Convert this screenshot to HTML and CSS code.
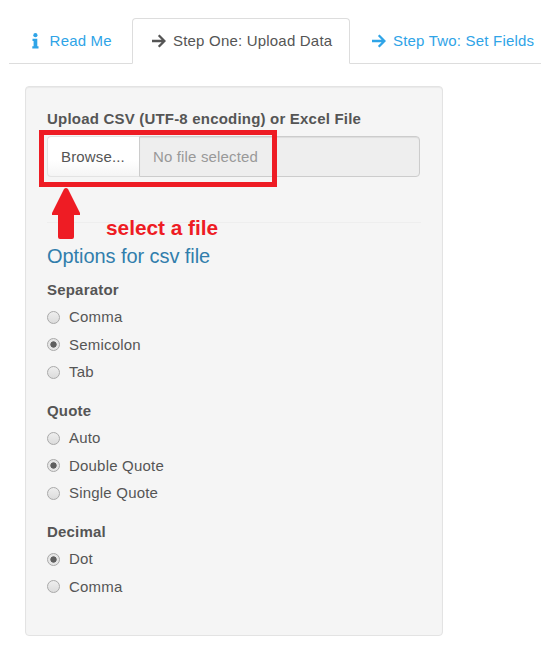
FILE: index.html
```html
<!DOCTYPE html>
<html lang="en">
<head>
<meta charset="utf-8">
<title>Upload Data</title>
<link rel="stylesheet" href="styles.css">
</head>
<body>
<nav class="tabs">
  <a class="tab tab-readme"><svg class="icon-info" viewBox="0 0 7 16"><circle cx="3.4" cy="2.2" r="2.1"/><path d="M.5 5.7h4.8v7.5h1.2v2.3H.3v-2.3h1.3V8H.5z"/></svg><span>Read Me</span></a>
  <a class="tab active"><svg class="icon-arrow" viewBox="0 0 14 14"><path d="M0 7h12M6.7 1.3 12.4 7l-5.7 5.7"/></svg><span>Step One: Upload Data</span></a>
  <a class="tab tab-next"><svg class="icon-arrow" viewBox="0 0 14 14"><path d="M0 7h12M6.7 1.3 12.4 7l-5.7 5.7"/></svg><span>Step Two: Set Fields</span></a>
</nav>
<form class="panel">
  <div class="label upload-label">Upload CSV (UTF-8 encoding) or Excel File</div>
  <div class="upload">
    <span class="browse">Browse...</span>
    <span class="filename">No file selected</span>
  </div>
  <hr>
  <h2>Options for csv file</h2>
  <div class="group">
    <div class="label">Separator</div>
    <label class="option"><i class="radio"></i><span>Comma</span></label>
    <label class="option"><i class="radio checked"></i><span>Semicolon</span></label>
    <label class="option"><i class="radio"></i><span>Tab</span></label>
  </div>
  <div class="group">
    <div class="label">Quote</div>
    <label class="option"><i class="radio"></i><span>Auto</span></label>
    <label class="option"><i class="radio checked"></i><span>Double Quote</span></label>
    <label class="option"><i class="radio"></i><span>Single Quote</span></label>
  </div>
  <div class="group">
    <div class="label">Decimal</div>
    <label class="option"><i class="radio checked"></i><span>Dot</span></label>
    <label class="option"><i class="radio"></i><span>Comma</span></label>
  </div>
  <div class="highlight"></div>
  <svg class="pointer" viewBox="0 0 28 51"><path d="M12 1Q14 -1 16 1L28 25v2h-6v22q0 2-2 2H8q-2 0-2-2V27H0v-2z"/></svg>
  <div class="hint">select a file</div>
</form>
</body>
</html>
```

FILE: styles.css
```css
* { box-sizing: border-box; }
body {
  margin: 0;
  padding: 18px 12px 0 9px;
  background: #fff;
  color: #555;
  font: 15px/21px "Liberation Sans", Arial, sans-serif;
  letter-spacing: 0.2px;
}
.tabs {
  display: flex;
  height: 46px;
  border-bottom: 1px solid #ddd;
}
.tab {
  display: flex;
  align-items: center;
  height: 46px;
  padding: 0 0 1px 19px;
  border: 1px solid transparent;
  color: #2fa4e7;
  white-space: nowrap;
}
.tab.active {
  width: 218px;
  color: #555;
  background: #fff;
  border-color: #ddd #ddd #fff;
  border-radius: 4px 4px 0 0;
}
.tab-readme { width: 123px; padding-left: 22px; }
.tab-next { padding-left: 21px; }
.icon-info { width: 7px; height: 16px; margin-right: 10.6px; fill: currentColor; }
.icon-arrow {
  width: 14px;
  height: 14px;
  margin-right: 7px;
  fill: none;
  stroke: currentColor;
  stroke-width: 2.3;
}
.panel {
  position: relative;
  width: 418px;
  height: 550px;
  margin: 22px 0 0 16px;
  padding: 21px;
  background: #f5f5f5;
  border: 1px solid #e3e3e3;
  border-radius: 4px;
  box-shadow: inset 0 1px 1px rgba(0,0,0,.05);
}
.label { font-weight: bold; height: 21px; }
.upload-label { margin-bottom: 7px; }
.upload { display: flex; width: 373px; height: 41px; line-height: 39px; letter-spacing: 0.15px; }
.browse {
  width: 92px;
  padding-left: 13px;
  border: 1px solid #e3e3e3;
  border-right: 0;
  border-radius: 4px 0 0 4px;
  background: linear-gradient(#fff 60%, #f5f5f5);
}
.filename {
  flex: 1;
  padding-left: 13px;
  color: #999;
  background: #eee;
  border: 1px solid #ccc;
  border-radius: 0 4px 4px 0;
  box-shadow: inset 0 1px 1px rgba(0,0,0,.075);
}
hr { margin: 45px 0 22px; border: 0; border-top: 1px solid #eee; }
h2 {
  margin: 0 0 12px;
  color: #317eac;
  font-size: 20px;
  font-weight: normal;
  line-height: 22px;
  letter-spacing: -0.07px;
}
.group { height: 121px; }
.group .label { margin-bottom: 7px; }
.option { display: flex; align-items: center; height: 21px; margin-bottom: 6.4px; }
.option span { padding-bottom: 1px; }
.label + .option span { padding-bottom: 2px; }
.radio {
  width: 13px;
  height: 13px;
  margin-right: 9px;
  border: 1px solid #a9a9a9;
  border-radius: 50%;
  background: linear-gradient(#eee, #dcdcdc);
}
.radio.checked { background: radial-gradient(circle, #5f5f5f 0 2.8px, #e6e6e6 3.5px); }
.highlight {
  position: absolute;
  left: 13px;
  top: 43px;
  width: 238px;
  height: 57px;
  border: 5px solid #ee1c24;
}
.pointer { position: absolute; left: 26px; top: 101px; width: 28px; height: 51px; fill: #ee1c24; }
.hint {
  position: absolute;
  left: 80px;
  top: 129px;
  color: #ee1c24;
  font-size: 20.8px;
  font-weight: bold;
  line-height: 24px;
  letter-spacing: 0;
}
```
